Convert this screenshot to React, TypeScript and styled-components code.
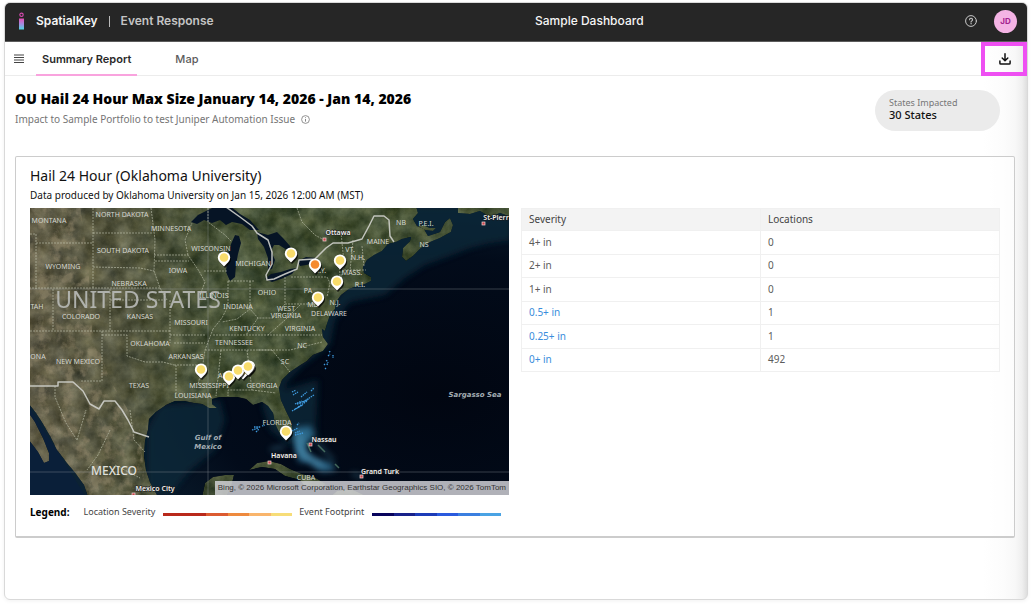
import React from 'react';
import styled, { createGlobalStyle, css } from 'styled-components';

const GlobalStyle = createGlobalStyle`
  *, *::before, *::after { box-sizing: border-box; }
  body {
    margin: 0;
    background: #fff;
    color: #111;
    font-family: 'Noto Sans', sans-serif;
    font-size: 10px;
    line-height: 16px;
  }
  h1, h2, p { margin: 0; font-weight: 400; }
  button { font: inherit; color: inherit; background: none; border: 0; padding: 0; cursor: pointer; }
  a { color: inherit; text-decoration: none; }
`;

const brandFont = css`
  font-family: Inter, 'Liberation Sans', sans-serif;
`;

const Frame = styled.div`
  display: flex;
  flex-direction: column;
  min-height: calc(100vh - 8px);
  margin: 2px 4px 6px;
  border: 1px solid #d9d9d9;
  border-radius: 6px;
  overflow: hidden;
  background: linear-gradient(to left, #dedede 0, #efefef 5px, #f8f8f8 12px, #fcfcfc 24px, #fff 44px);
  box-shadow: 0 1px 4px rgba(0, 0, 0, 0.06);
`;

const TopBar = styled.header`
  ${brandFont}
  display: flex;
  align-items: center;
  justify-content: space-between;
  height: 39px;
  padding: 0 10px 2px 13px;
  border-bottom: 1px solid #5c5c5c;
  background: #262626;
  color: #f5f5f5;
`;

const Brand = styled.a`
  display: flex;
  align-items: center;
  gap: 11px;
  font-size: 12px;
  font-weight: 600;
`;

const BrandDivider = styled.span`
  width: 1px;
  height: 11px;
  background: #bbb;
`;

const ProductName = styled.span`
  color: #c4c4c4;
`;

const DashboardName = styled.h1`
  font-size: 12px;
  font-weight: 500;
`;

const TopActions = styled.div`
  display: flex;
  align-items: center;
  gap: 17px;
`;

const IconButton = styled.button`
  display: flex;
  align-items: center;
  justify-content: center;
`;

const Avatar = styled.button`
  width: 23px;
  height: 23px;
  border-radius: 50%;
  background: #f4b3e4;
  color: #a3218e;
  font-size: 8px;
  font-weight: 700;
`;

const NavBar = styled.nav`
  ${brandFont}
  display: flex;
  align-items: stretch;
  height: 34px;
  padding-left: 9px;
  box-shadow: inset 0 -1px #ececec;
`;

const TabList = styled.div`
  display: flex;
  flex: 1;
  gap: 32px;
  margin-left: 12px;
`;

const Tab = styled.a<{ $active?: boolean }>`
  display: flex;
  align-items: center;
  padding: 2px 6px 0;
  font-size: 11px;
  font-weight: ${(p) => (p.$active ? 600 : 500)};
  color: ${(p) => (p.$active ? '#2a2a2a' : '#5c5c5c')};
  border-bottom: 2px solid ${(p) => (p.$active ? '#f9a3de' : 'transparent')};
`;

const DownloadButton = styled.button`
  display: flex;
  align-items: center;
  justify-content: center;
  width: 46px;
  padding-left: 2px;
  border: 4px solid #ee4ff2;
  color: #111;
`;

const Content = styled.main`
  flex: 1;
  padding: 14px 12px 24px 10px;
`;

const Heading = styled.div`
  display: flex;
  align-items: flex-start;
  justify-content: space-between;
  padding-right: 15px;
`;

const ReportTitle = styled.h2`
  font-size: 14px;
  line-height: 18px;
  font-weight: 900;
  color: #000;
`;

const ReportSubtitle = styled.p`
  display: flex;
  align-items: center;
  gap: 6px;
  margin-top: 3px;
  font-size: 10px;
  color: #757575;
`;

const StatPill = styled.div`
  display: flex;
  flex-direction: column;
  width: 125px;
  padding: 6px 14px 10px;
  border-radius: 21px;
  background: #ebebeb;
`;

const StatLabel = styled.span`
  font-size: 9px;
  line-height: 13px;
  color: #777;
`;

const StatValue = styled.span`
  font-size: 11px;
  line-height: 12px;
  font-weight: 500;
`;

const Card = styled.section`
  margin-top: 25px;
  padding: 9px 14px 16px;
  border: 1px solid #ccc;
  border-bottom: 2px solid #ccc;
  border-radius: 2px;
  background: rgba(255, 255, 255, 0.6);
`;

const CardTitle = styled.h2`
  font-size: 14px;
  line-height: 20px;
`;

const CardNote = styled.p`
  font-size: 10px;
  line-height: 16px;
  margin: 1px 0 5px;
`;

const Columns = styled.div`
  display: grid;
  grid-template-columns: 1fr 1fr;
  gap: 12px;
  align-items: start;
`;

const MapPanel = styled.div`
  position: relative;
  overflow: hidden;
  background: #020a18;
`;

const MapSvg = styled.svg`
  display: block;
  width: 100%;
  height: auto;
`;

const Attribution = styled.div`
  position: absolute;
  right: 0;
  bottom: 0;
  padding: 0 3px;
  background: rgba(215, 215, 220, 0.82);
  color: #333;
  font-family: 'Liberation Sans', sans-serif;
  font-size: 8px;
  line-height: 14px;
  white-space: nowrap;
`;

const SeverityTable = styled.table`
  width: 100%;
  height: 164px;
  border-collapse: collapse;
  table-layout: fixed;
  font-size: 10px;
  line-height: 14px;
  color: #5c5c5c;
  text-align: left;
`;

const HeaderCell = styled.th`
  padding: 3px 7px 4px;
  border: 1px solid #f0f0f0;
  background: #f3f3f3;
  font-weight: 400;
  color: #444;
`;

const Cell = styled.td`
  padding: 3px 7px 4px;
  border: 1px solid #f0f0f0;
`;

const SeverityLink = styled.a`
  color: #3a8ddc;
`;

const Legend = styled.div`
  display: flex;
  align-items: center;
  margin-top: 9px;
  color: #444;
`;

const LegendTitle = styled.strong`
  margin-right: 14px;
  color: #000;
`;

const LegendLabel = styled.span`
  font-size: 9px;
`;

const Ramp = styled.span`
  display: flex;
  width: 129px;
  height: 3px;
  margin: 4px 7px 0 8px;
`;

const RampStep = styled.span<{ $color: string }>`
  flex: 1;
  background: ${(p) => p.$color};
`;

const rows = [
  { severity: '4+ in', count: 0 },
  { severity: '2+ in', count: 0 },
  { severity: '1+ in', count: 0 },
  { severity: '0.5+ in', count: 1, link: true },
  { severity: '0.25+ in', count: 1, link: true },
  { severity: '0+ in', count: 492, link: true },
];

const severityRamp = ['#b9291b', '#b9291b', '#dc5b31', '#ee8a3e', '#f9b56c', '#f7dd78'];
const footprintRamp = ['#08045c', '#18228a', '#1d3cb8', '#2a5ade', '#3b7fe0', '#4aa3e4'];

type Label = [string, number, number];

const regionLabels: Label[] = [
  ['MONTANA', 49, 223], ['NORTH DAKOTA', 122, 217], ['MINNESOTA', 171, 231],
  ['SOUTH DAKOTA', 123, 253], ['WISCONSIN', 211, 251], ['MICHIGAN', 253, 266],
  ['WYOMING', 63, 269], ['IOWA', 178, 273], ['NEBRASKA', 129, 286],
  ['ILLINOIS', 214, 298], ['OHIO', 267, 295], ['PA', 308, 293], ['INDIANA', 238, 309],
  ['COLORADO', 81, 319], ['KANSAS', 140, 319], ['MISSOURI', 191, 325],
  ['WEST', 286, 311], ['VIRGINIA', 286, 318], ['DELAWARE', 329, 316], ['MD', 313, 307],
  ['N.J.', 335, 305], ['KENTUCKY', 247, 331], ['VIRGINIA', 300, 331],
  ['OKLAHOMA', 150, 346], ['TENNESSEE', 234, 345], ['NC', 302, 348], ['TAH', 37, 309],
  ['ONA', 38, 359], ['NEW MEXICO', 78, 364], ['ARKANSAS', 186, 359], ['SC', 285, 364],
  ['TEXAS', 139, 388], ['MISSISSIPPI', 209, 388], ['AL', 222, 378], ['GEORGIA', 262, 388],
  ['LOUISIANA', 193, 398], ['FLORIDA', 277, 425], ['CUBA', 306, 480],
  ['NB', 401, 225], ['P.E.I.', 426, 226], ['MAINE', 378, 244], ['NS', 424, 247],
  ['VT.', 350, 252], ['N.H.', 358, 260], ['MASS.', 352, 275], ['N.Y.', 320, 273], ['R.I.', 360, 287],
];

const cityLabels: Label[] = [
  ['Ottawa', 338, 235], ['St-Pierr', 496, 220], ['Nassau', 324, 442],
  ['Havana', 284, 458], ['Grand Turk', 380, 474], ['Mexico City', 155, 491],
];

const cityDots = [[324, 239], [483, 223], [310, 444], [269, 462], [361, 476], [133, 494]];

const yellow = '#f8dc6b';
const pins: { x: number; y: number; fill: string }[] = [
  { x: 224, y: 258, fill: yellow }, { x: 291, y: 254, fill: yellow },
  { x: 315, y: 265, fill: '#f58a2e' }, { x: 340, y: 261, fill: yellow },
  { x: 337, y: 282, fill: yellow }, { x: 318, y: 298, fill: yellow },
  { x: 201, y: 370, fill: yellow }, { x: 243, y: 371, fill: yellow },
  { x: 249, y: 367, fill: yellow }, { x: 229, y: 377, fill: yellow },
  { x: 238, y: 371, fill: yellow }, { x: 248, y: 367, fill: yellow },
  { x: 286, y: 432, fill: yellow },
];

const mainland =
  'M28 206 H416 L418 213 413 219 417 226 424 229 428 236 440 232 445 222 450 218 453 225 451 232 440 238 430 242 421 248 413 256 406 261 402 257 403 248 410 241 411 237 402 239 396 242 388 244 382 251 374 255 367 260 363 267 364 273 371 277 371 281 365 284 357 286 349 289 341 295 336 302 335 309 330 315 327 324 325 331 322 329 323 337 328 344 323 351 313 355 307 361 299 366 290 372 282 380 279 388 281 400 286 411 291 421 293 433 289 438 284 438 279 432 275 424 273 413 268 406 262 402 253 405 246 399 237 397 226 397 220 397 212 399 212 404 217 408 209 408 202 404 194 403 184 401 175 401 166 405 156 412 149 419 148 430 145 441 144 456 146 470 150 482 158 497 H88 L84 485 76 474 67 463 57 450 50 436 43 424 36 413 28 403Z';

const islands = [
  'M28 412 L35 422 43 438 49 453 49 461 44 463 38 452 28 439Z',
  'M202 497 L205 483 213 477 225 475 234 475 231 487 226 497Z',
  'M249 470 L257 463 269 461 281 464 290 469 302 474 314 477 326 484 322 488 305 487 300 480 285 476 275 469 262 467Z',
  'M330 497 L337 491 351 489 368 497Z',
  'M458 206 V213 L470 214 480 211 490 217 500 213 511 217 511 206Z',
  'M418 226 L425 230 433 231 436 228 430 228 423 225Z',
];

const lakes = [
  'M191 222 L198 215 208 210 216 206 230 206 240 214 250 220 259 230 250 230 242 224 232 222 226 225 220 220 212 223 204 220 197 224Z',
  'M235 235 L231 244 227 258 226 272 230 281 235 277 236 265 238 254 241 243 239 236Z',
  'M257 232 L268 235 277 232 283 238 290 246 293 253 287 250 279 245 274 245 271 251 275 260 272 269 268 270 268 258 264 247 258 239Z',
  'M265 279 L271 274 281 272 290 269 297 268 292 274 281 279 272 282Z',
  'M298 261 L306 257 316 258 320 261 312 264 300 266Z',
];

const stateLines =
  'M93 208 V288 M30 234 H36 V289 M36 243 H93 M93 233 H153 M93 267 L140 268 154 271 M151 208 L155 240 154 271 160 288 M160 288 H30 M155 261 H189 M53 289 V331 M110 289 V331 M30 331 H170 M110 300 H167 M170 300 V343 M102 331 V381 H80 M102 335 H127 V356 L145 362 163 362 174 365 M170 335 H206 M160 288 L167 300 M154 255 H188 L199 271 205 282 200 295 M188 255 L185 240 192 223 M208 208 V222 L225 235 231 241 M204 271 H228 M228 281 V306 L222 318 213 329 M228 281 H255 M250 281 V309 L237 319 222 322 M285 277 V304 L273 318 258 318 250 309 M285 304 H316 M291 277 H327 L330 283 327 297 M213 335 H322 M205 350 H272 M213 329 L205 350 202 370 M174 343 H205 M174 365 H202 M176 365 V395 M202 370 L198 384 H211 M221 350 L216 396 M247 350 L252 390 H228 V396 M252 390 L276 393 M272 350 L290 372 M258 350 L290 350 322 342 M258 318 L246 335 M300 305 L285 320 268 335 M341 232 L344 263 340 285 M353 240 L350 271 M362 246 L364 266 M344 270 H366 M297 208 L302 222 315 235 324 240 M339 262 L341 290 M55 386 V397 L66 423 77 440 M77 440 L86 410 M110 430 L98 455 87 470 M130 410 L134 440 145 452 M115 465 L140 478';

const internationalBorder =
  'M30 386 H58 V382 H73 L83 391 90 404 99 409 104 401 115 401 122 410 128 420 134 432 149 437 M226 207 L240 217 252 226 257 233 268 240 272 252 272 264 266 275 267 280 274 279 285 274 297 269 299 260 315 259 326 248 333 243 348 243 362 239 369 226 374 216 384 216 389 220 390 236 394 242';

const footprint =
  'M329 352 l2 -1 m-3 5 l2 -2 m-4 7 l2 -1 m-1 5 l1 -3 m-3 7 l1 -1 m-2 -4 l1 1 m8 -10 l0 3 M292 392 l4 -2 m-3 5 l5 -3 M292 411 l7 -4 m-4 -3 l7 -3 m-4 6 l9 -6 m-12 8 l8 -4 m-2 -8 l6 -5 m-4 10 l11 -7 m-17 9 l4 -1 m10 -12 l3 -3 m-14 15 l9 -4 M292 431 l6 -3 m-3 5 l5 -2 m-5 4 l8 -2 m-6 -8 l2 -2 M252 430 l6 -2 m-4 -1 l7 0 m-5 5 l3 -3 m3 -3 l3 -1';

function Pin({ x, y, fill }: { x: number; y: number; fill: string }) {
  return (
    <g transform={`translate(${x} ${y})`}>
      <path d="M0 9 L-4 5 A6 6 0 1 1 4 5 Z" transform="translate(1 1)" fill="#000" opacity="0.75" />
      <path d="M0 8.500 L-4.200 4.200 A6.200 6.200 0 1 1 4.200 4.200 Z" fill="#fff" />
      <circle cx="0" cy="-0.500" r="4.300" fill={fill} />
    </g>
  );
}

function HailMap() {
  return (
    <MapSvg viewBox="30 208 479 287" role="img" aria-label="Map of hail locations in the eastern United States">
      <defs>
        <linearGradient id="landTone" gradientUnits="userSpaceOnUse" x1="30" x2="509" y1="208" y2="208">
          <stop offset="0" stopColor="#5c5843" />
          <stop offset="0.2" stopColor="#51533c" />
          <stop offset="0.4" stopColor="#445034" />
          <stop offset="1" stopColor="#414e31" />
        </linearGradient>
        <radialGradient id="seaTone" cx="0.85" cy="0.65" r="0.8">
          <stop offset="0" stopColor="#010611" />
          <stop offset="0.6" stopColor="#020b1a" />
          <stop offset="1" stopColor="#0c2233" />
        </radialGradient>
        <filter id="terrain" x="0" y="0" width="100%" height="100%" colorInterpolationFilters="sRGB">
          <feTurbulence type="fractalNoise" baseFrequency="0.06" numOctaves="6" seed="8" result="noise" />
          <feColorMatrix in="noise" type="matrix" values="1 0 0 0 0  0.95 0.05 0 0 0  0.8 0.2 0 0 0  0 0 0 0 1" result="relief" />
          <feComposite in="SourceGraphic" in2="relief" operator="arithmetic" k1="0" k2="1" k3="0.36" k4="-0.17" result="shaded" />
          <feComposite in="shaded" in2="SourceGraphic" operator="in" />
        </filter>
        <filter id="aridNoise" x="0" y="0" width="100%" height="100%" colorInterpolationFilters="sRGB">
          <feTurbulence type="fractalNoise" baseFrequency="0.08" numOctaves="5" seed="3" result="noise" />
          <feColorMatrix in="noise" type="matrix" values="0 0 0 0 0.62  0 0 0 0 0.57  0 0 0 0 0.46  4 0 0 0 -1.900" result="sand" />
          <feComposite in="sand" in2="SourceGraphic" operator="in" />
        </filter>
        <filter id="soft" x="-20%" y="-20%" width="140%" height="140%">
          <feGaussianBlur stdDeviation="3" />
        </filter>
        <clipPath id="landClip">
          <path d={mainland} />
        </clipPath>
      </defs>

      <rect x="30" y="208" width="479" height="287" fill="url(#seaTone)" />
      <path d="M400 206 H511 V240 L490 243 470 248 450 256 425 265 405 278 385 295 350 302 335 320 330 345 300 368 290 378 283 390 300 385 318 380 316 425 318 440 290 445 270 430 262 405 M220 400 L160 405 147 430 147 495 170 495 190 470 215 450 225 420Z" fill="#102a3b" opacity="0.75" filter="url(#soft)" />
      <path d="M28 406 L60 455 86 497 H28Z" fill="#0a1f3b" opacity="0.8" />
      <path d="M294 428 L311 426 314 436 307 442 306 452 316 459 331 463 336 470 322 472 308 462 299 462 295 449Z" fill="#35799f" opacity="0.8" filter="url(#soft)" />
      <path d="M297 435 L300 450 307 457 322 466" fill="none" stroke="#5fa3c4" strokeWidth="5" opacity="0.5" filter="url(#soft)" />
      <path d="M298 432 L304 440 301 449 308 460 M316 441 L326 453 334 461 M270 450 L285 446 M352 473 L362 478" fill="none" stroke="#4c93b0" strokeWidth="3" opacity="0.45" filter="url(#soft)" />
      <path d="M307 443 L311 452 M318 445 L325 452 M335 464 L339 468" fill="none" stroke="#5b8a72" strokeWidth="1.500" opacity="0.7" />

      <g filter="url(#terrain)" fill="url(#landTone)">
        <path d={mainland} />
        {islands.map((d) => (
          <path key={d} d={d} />
        ))}
      </g>
      <g clipPath="url(#landClip)">
        <path d="M28 206 H80 L88 260 92 330 110 380 140 430 146 497 H80 L28 400Z" fill="#fff" opacity="0.5" filter="url(#aridNoise)" />
      </g>
      {lakes.map((d) => (
        <path key={d} d={d} fill="#061425" />
      ))}

      <path d="M30 289 H509 M30 472 H509 M208 208 V495" fill="none" stroke="#9aa3a8" strokeWidth="0.500" opacity="0.7" />
      <path d={stateLines} fill="none" stroke="#c5c8b4" strokeWidth="0.800" strokeDasharray="2 1" opacity="0.75" />
      <path d={internationalBorder} fill="none" stroke="#cfd0cb" strokeWidth="1.500" strokeLinejoin="round" opacity="0.9" />
      <path d={footprint} fill="none" stroke="#3f9be0" strokeWidth="1.300" strokeDasharray="1.500 0.800" />

      <g fontFamily="'Noto Sans', sans-serif" textAnchor="middle">
        <text x="138" y="308" fontSize="23" fill="#b9bbb8" opacity="0.9">UNITED STATES</text>
        <text x="114" y="475" fontSize="12" fontWeight="500" fill="#e0e0dc">MEXICO</text>
        <g fontSize="7" fill="#d5d6cf">
          {regionLabels.map(([name, x, y]) => (
            <text key={`${name}-${x}`} x={x} y={y}>{name}</text>
          ))}
        </g>
        <g fontSize="7" fontWeight="600" fill="#f0f0f0" stroke="#1a1a1a" strokeWidth="1" paintOrder="stroke">
          {cityLabels.map(([name, x, y]) => (
            <text key={name} x={x} y={y}>{name}</text>
          ))}
        </g>
        <g fontSize="7" fontWeight="600" fontStyle="italic" fill="#a3adb3" fontFamily="'DejaVu Sans', sans-serif">
          <text x="208" y="440">Gulf of</text>
          <text x="208" y="449">Mexico</text>
          <text x="475" y="397">Sargasso Sea</text>
        </g>
      </g>
      {cityDots.map(([x, y]) => (
        <rect key={`${x}-${y}`} x={x - 1} y={y - 1} width="3" height="3" fill="#c9444a" stroke="#f0d8d8" strokeWidth="0.700" />
      ))}
      {pins.map((pin, i) => (
        <Pin key={i} {...pin} />
      ))}
    </MapSvg>
  );
}

function BrandMark() {
  return (
    <svg width="7" height="18" viewBox="0 0 7 18" aria-hidden="true">
      <defs>
        <linearGradient id="brandFill" x1="0" x2="0" y1="0" y2="1">
          <stop offset="0" stopColor="#e84fb4" />
          <stop offset="0.500" stopColor="#a58be0" />
          <stop offset="1" stopColor="#4fd8e0" />
        </linearGradient>
      </defs>
      <circle cx="3.500" cy="2.800" r="1.700" fill="none" stroke="#d94bb0" strokeWidth="1.100" />
      <rect x="1" y="6.500" width="5" height="11" fill="url(#brandFill)" />
    </svg>
  );
}

function ColorRamp({ colors }: { colors: string[] }) {
  return (
    <Ramp aria-hidden="true">
      {colors.map((color, i) => (
        <RampStep key={i} $color={color} />
      ))}
    </Ramp>
  );
}

export default function App() {
  return (
    <>
      <GlobalStyle />
      <Frame>
        <TopBar>
          <Brand href="#home">
            <BrandMark />
            <span>SpatialKey</span>
            <BrandDivider />
            <ProductName>Event Response</ProductName>
          </Brand>
          <DashboardName>Sample Dashboard</DashboardName>
          <TopActions>
            <IconButton type="button" aria-label="Help">
              <svg width="12" height="12" viewBox="0 0 12 12" fill="none" stroke="#c8c8c8" strokeLinecap="round" aria-hidden="true">
                <circle cx="6" cy="6" r="5.400" strokeWidth="1" />
                <path d="M4.600 4.700 A1.450 1.450 0 1 1 6.700 6 Q6 6.400 6 7.100" strokeWidth="1.100" />
                <circle cx="6" cy="8.800" r="0.350" fill="#c8c8c8" strokeWidth="0.500" />
              </svg>
            </IconButton>
            <Avatar type="button" aria-label="Account">JD</Avatar>
          </TopActions>
        </TopBar>

        <NavBar>
          <IconButton type="button" aria-label="Open menu">
            <svg width="10" height="10" viewBox="0 0 10 10" stroke="#444" strokeWidth="1.100" aria-hidden="true">
              <path d="M0 1 H10 M0 3.500 H10 M0 6 H10 M0 8.500 H10" />
            </svg>
          </IconButton>
          <TabList>
            <Tab href="#summary" $active aria-current="page">Summary Report</Tab>
            <Tab href="#map">Map</Tab>
          </TabList>
          <DownloadButton type="button" aria-label="Download">
            <svg width="12" height="12" viewBox="0 0 12 12" fill="none" stroke="currentColor" strokeWidth="1.500" strokeLinecap="round" strokeLinejoin="round" aria-hidden="true">
              <path d="M6 0.800 V7.600 M3.200 5 L6 7.800 8.800 5" />
              <path d="M0.900 8 V10.200 Q0.900 11.100 1.800 11.100 H10.200 Q11.100 11.100 11.100 10.200 V8" />
            </svg>
          </DownloadButton>
        </NavBar>

        <Content>
          <Heading>
            <div>
              <ReportTitle>OU Hail 24 Hour Max Size January 14, 2026 - Jan 14, 2026</ReportTitle>
              <ReportSubtitle>
                Impact to Sample Portfolio to test Juniper Automation Issue
                <svg width="9" height="9" viewBox="0 0 9 9" fill="none" stroke="#777" aria-hidden="true">
                  <circle cx="4.500" cy="4.500" r="3.900" strokeWidth="0.800" />
                  <path d="M4.500 4 V6.600 M4.500 2.300 V3.100" strokeWidth="0.900" />
                </svg>
              </ReportSubtitle>
            </div>
            <StatPill>
              <StatLabel>States Impacted</StatLabel>
              <StatValue>30 States</StatValue>
            </StatPill>
          </Heading>

          <Card>
            <CardTitle>Hail 24 Hour (Oklahoma University)</CardTitle>
            <CardNote>Data produced by Oklahoma University on Jan 15, 2026 12:00 AM (MST)</CardNote>
            <Columns>
              <MapPanel>
                <HailMap />
                <Attribution>Bing, © 2026 Microsoft Corporation, Earthstar Geographics SIO, © 2026 TomTom</Attribution>
              </MapPanel>
              <SeverityTable>
                <thead>
                  <tr>
                    <HeaderCell scope="col">Severity</HeaderCell>
                    <HeaderCell scope="col">Locations</HeaderCell>
                  </tr>
                </thead>
                <tbody>
                  {rows.map((row) => (
                    <tr key={row.severity}>
                      <Cell>
                        {row.link ? <SeverityLink href="#severity">{row.severity}</SeverityLink> : row.severity}
                      </Cell>
                      <Cell>{row.count}</Cell>
                    </tr>
                  ))}
                </tbody>
              </SeverityTable>
            </Columns>
            <Legend>
              <LegendTitle>Legend:</LegendTitle>
              <LegendLabel>Location Severity</LegendLabel>
              <ColorRamp colors={severityRamp} />
              <LegendLabel>Event Footprint</LegendLabel>
              <ColorRamp colors={footprintRamp} />
            </Legend>
          </Card>
        </Content>
      </Frame>
    </>
  );
}
